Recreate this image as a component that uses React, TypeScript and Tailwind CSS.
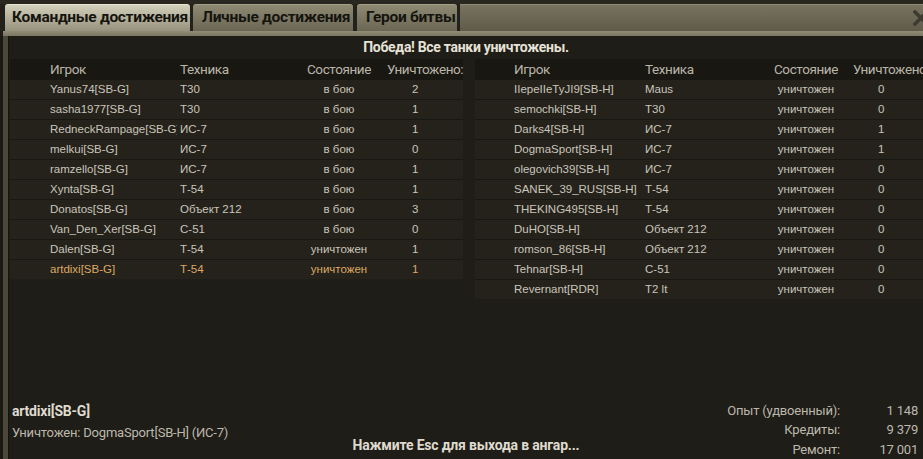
import React from "react";

const narrow = "font-['Roboto','DejaVu_Sans_Condensed',sans-serif]";
const plain = "font-['Liberation_Sans','Arial',sans-serif]";

type Row = { name: string; tank: string; state: string; kills: string; me?: boolean };

const ours: Row[] = [
  { name: "Yanus74[SB-G]", tank: "T30", state: "в бою", kills: "2" },
  { name: "sasha1977[SB-G]", tank: "T30", state: "в бою", kills: "1" },
  { name: "RedneckRampage[SB-G]", tank: "ИС-7", state: "в бою", kills: "1" },
  { name: "melkui[SB-G]", tank: "ИС-7", state: "в бою", kills: "0" },
  { name: "ramzello[SB-G]", tank: "ИС-7", state: "в бою", kills: "1" },
  { name: "Xynta[SB-G]", tank: "Т-54", state: "в бою", kills: "1" },
  { name: "Donatos[SB-G]", tank: "Объект 212", state: "в бою", kills: "3" },
  { name: "Van_Den_Xer[SB-G]", tank: "С-51", state: "в бою", kills: "0" },
  { name: "Dalen[SB-G]", tank: "Т-54", state: "уничтожен", kills: "1" },
  { name: "artdixi[SB-G]", tank: "Т-54", state: "уничтожен", kills: "1", me: true },
];

const enemies: Row[] = [
  { name: "IIepeIIeTyJI9[SB-H]", tank: "Maus", state: "уничтожен", kills: "0" },
  { name: "semochki[SB-H]", tank: "T30", state: "уничтожен", kills: "0" },
  { name: "Darks4[SB-H]", tank: "ИС-7", state: "уничтожен", kills: "1" },
  { name: "DogmaSport[SB-H]", tank: "ИС-7", state: "уничтожен", kills: "1" },
  { name: "olegovich39[SB-H]", tank: "ИС-7", state: "уничтожен", kills: "0" },
  { name: "SANEK_39_RUS[SB-H]", tank: "Т-54", state: "уничтожен", kills: "0" },
  { name: "THEKING495[SB-H]", tank: "Т-54", state: "уничтожен", kills: "0" },
  { name: "DuHO[SB-H]", tank: "Объект 212", state: "уничтожен", kills: "0" },
  { name: "romson_86[SB-H]", tank: "Объект 212", state: "уничтожен", kills: "0" },
  { name: "Tehnar[SB-H]", tank: "С-51", state: "уничтожен", kills: "0" },
  { name: "Revernant[RDR]", tank: "T2 lt", state: "уничтожен", kills: "0" },
];

function Table({ rows, cols, killPad, headPad }: { rows: Row[]; cols: string; killPad: string; headPad: string }) {
  return (
    <div className="flex flex-col">
      <div className={`grid ${cols} h-[20px] items-center bg-[#191712] text-[#b9b5a9] text-[13.5px] tracking-[-0.4px] whitespace-nowrap ${narrow}`}>
        <div />
        <div>Игрок</div>
        <div>Техника</div>
        <div className="text-center">Состояние</div>
        <div className={headPad}>Уничтожено:</div>
      </div>
      {rows.map((r) => (
        <div
          key={r.name}
          className={`grid ${cols} h-[20px] items-center border-t border-[#191712] bg-[#25221c] text-[11.5px] whitespace-nowrap ${plain} ${
            r.me ? "text-[#dca962]" : "text-[#c9c5ba]"
          }`}
        >
          <div />
          <div className="overflow-hidden mr-[3px]">{r.name}</div>
          <div>{r.tank}</div>
          <div className="text-center">{r.state}</div>
          <div className={killPad}>{r.kills}</div>
        </div>
      ))}
    </div>
  );
}

export default function App() {
  return (
    <div className="w-[923px] h-[459px] overflow-hidden bg-[#1f1c17] flex flex-col">
      <div className="h-[4px] bg-[#2a2720]" />

      {/* tabs */}
      <div className={`h-[27px] flex bg-[#23211b] ${narrow} font-bold text-[15.5px] tracking-[-0.3px] text-[#15140f] whitespace-nowrap`}>
        <div className="w-[5px]" />
        <div className="w-[185px] rounded-t-[3px] bg-gradient-to-b from-[#d2cfbb] to-[#96927c] border-t border-[#e6e3d2] flex items-center pl-[7px]">
          Командные достижения
        </div>
        <div className="w-[3px]" />
        <div className="w-[160px] rounded-t-[3px] bg-gradient-to-b from-[#8d8972] to-[#6a6654] border-t border-[#a29e88] flex items-center pl-[9px]">
          Личные достижения
        </div>
        <div className="w-[4px]" />
        <div className="w-[100px] rounded-t-[3px] bg-gradient-to-b from-[#8d8972] to-[#6a6654] border-t border-[#a29e88] flex items-center pl-[9px]">
          Герои битвы
        </div>
        <div className="w-[3px]" />
        <div className="flex-1 bg-gradient-to-b from-[#77735f] to-[#5f5b4a] border-t border-[#8e8a74] flex items-center justify-end">
          <svg width="16" height="16" viewBox="0 0 16 16" className="mr-[-6px]">
            <path d="M2 2 L14 14 M14 2 L2 14" stroke="#3c3a31" strokeWidth="3.5" strokeLinecap="square" />
          </svg>
        </div>
      </div>
      <div className="h-[5px] bg-gradient-to-b from-[#908c76] to-[#7a7662] ml-[3px]" />

      {/* main */}
      <div className="flex-1 flex min-h-0">
        <div className="w-[3px] bg-[#1b1914]" />
        <div className="w-[5px] bg-[#4b483b]" />
        <div className="w-[1px] bg-[#15130f]" />
        <div className="flex-1 flex flex-col bg-[#1f1d18] min-w-0">
          <div className={`h-[23px] flex items-center justify-center text-[14px] tracking-[-0.3px] font-bold text-[#e6e2d6] ${narrow}`}>
            Победа! Все танки уничтожены.
          </div>

          <div className="flex gap-[12px] pl-[1px]">
            <div className="w-[453px]">
              <Table rows={ours} cols="grid-cols-[40px_130px_113px_92px_1fr]" killPad="pl-[27px]" headPad="pl-[2px]" />
            </div>
            <div className="flex-1 min-w-0 overflow-hidden">
              <Table rows={enemies} cols="grid-cols-[39px_131px_125px_72px_1fr]" killPad="pl-[36px]" headPad="pl-[11px]" />
            </div>
          </div>

          <div className="flex-1" />

          {/* footer */}
          <div className={`grid grid-cols-[1fr_auto_1fr] ${narrow} tracking-[-0.2px]`}>
            <div className="pl-[3px]">
              <div className="leading-[21px] text-[14px] font-bold text-[#dedacd]">artdixi[SB-G]</div>
              <div className="leading-[21px] text-[13px] text-[#bcb8ac]">Уничтожен: DogmaSport[SB-H] (ИС-7)</div>
            </div>
            <div className="self-end mb-[4px] leading-[20px] text-[14px] font-bold text-[#dedacd]">
              Нажмите Esc для выхода в ангар...
            </div>
            <div className="flex justify-end pr-[5px]">
              <div className="grid grid-cols-[auto_78px] leading-[19.5px] text-[13px] text-[#bcb8ac] text-right">
                <div>Опыт (удвоенный):</div>
                <div>1 148</div>
                <div>Кредиты:</div>
                <div>9 379</div>
                <div>Ремонт:</div>
                <div>17 001</div>
              </div>
            </div>
          </div>
        </div>
      </div>
    </div>
  );
}
